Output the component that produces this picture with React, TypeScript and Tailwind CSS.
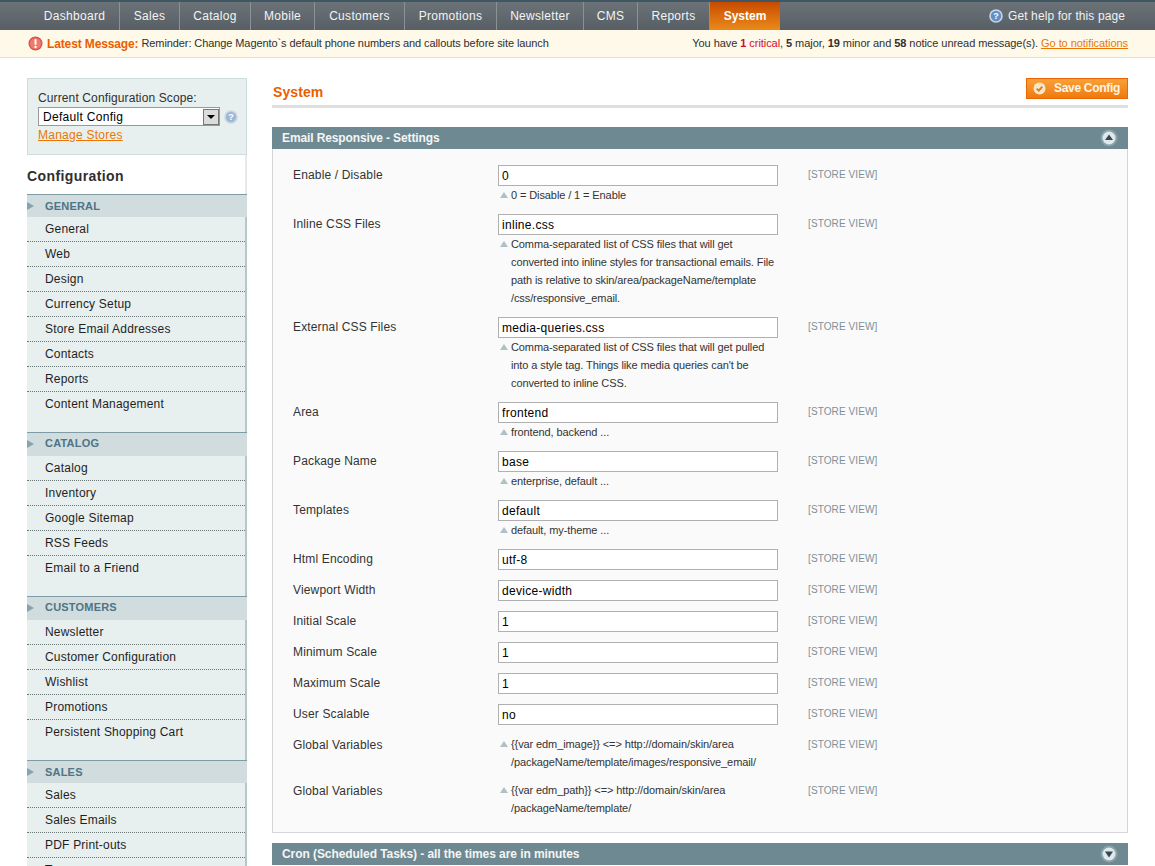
const navItems = [
  { label: "Dashboard", width: "w-[90px]" },
  { label: "Sales", width: "w-[60px]" },
  { label: "Catalog", width: "w-[71px]" },
  { label: "Mobile", width: "w-[64px]" },
  { label: "Customers", width: "w-[90px]" },
  { label: "Promotions", width: "w-[92px]" },
  { label: "Newsletter", width: "w-[87px]" },
  { label: "CMS", width: "w-[54px]" },
  { label: "Reports", width: "w-[72px]" },
];

const menu = [
  { title: "GENERAL", compact: true, items: ["General", "Web", "Design", "Currency Setup", "Store Email Addresses", "Contacts", "Reports", "Content Management"] },
  { title: "CATALOG", items: ["Catalog", "Inventory", "Google Sitemap", "RSS Feeds", "Email to a Friend"] },
  { title: "CUSTOMERS", items: ["Newsletter", "Customer Configuration", "Wishlist", "Promotions", "Persistent Shopping Cart"] },
  { title: "SALES", compact: true, items: ["Sales", "Sales Emails", "PDF Print-outs", "Tax"] },
];

const rows: { label: string; value?: string; note?: string[] }[] = [
  { label: "Enable / Disable", value: "0", note: ["0 = Disable / 1 = Enable"] },
  {
    label: "Inline CSS Files",
    value: "inline.css",
    note: [
      "Comma-separated list of CSS files that will get",
      "converted into inline styles for transactional emails. File",
      "path is relative to skin/area/packageName/template",
      "/css/responsive_email.",
    ],
  },
  {
    label: "External CSS Files",
    value: "media-queries.css",
    note: [
      "Comma-separated list of CSS files that will get pulled",
      "into a style tag. Things like media queries can't be",
      "converted to inline CSS.",
    ],
  },
  { label: "Area", value: "frontend", note: ["frontend, backend ..."] },
  { label: "Package Name", value: "base", note: ["enterprise, default ..."] },
  { label: "Templates", value: "default", note: ["default, my-theme ..."] },
  { label: "Html Encoding", value: "utf-8" },
  { label: "Viewport Width", value: "device-width" },
  { label: "Initial Scale", value: "1" },
  { label: "Minimum Scale", value: "1" },
  { label: "Maximum Scale", value: "1" },
  { label: "User Scalable", value: "no" },
  {
    label: "Global Variables",
    note: ["{{var edm_image}} <=> http://domain/skin/area", "/packageName/template/images/responsive_email/"],
  },
  {
    label: "Global Variables",
    note: ["{{var edm_path}} <=> http://domain/skin/area", "/packageName/template/"],
  },
];

function HelpIcon({ light }: { light?: boolean }) {
  return (
    <svg width="14" height="14" viewBox="0 0 14 14" className="shrink-0">
      <circle cx="7" cy="7" r="6.8" fill={light ? "#c9d8e6" : "#c3d6ea"} />
      <circle cx="7" cy="7" r="5.2" fill={light ? "#9db8d6" : "#5f8fc4"} />
      <text x="7" y="10.2" textAnchor="middle" fontSize="9" fontWeight="700" fill="#fff" fontFamily="Liberation Sans">?</text>
    </svg>
  );
}

function Toggle({ open }: { open: boolean }) {
  return (
    <svg width="18" height="18" viewBox="0 0 18 18">
      <circle cx="9" cy="9" r="8.5" fill="#8ba1a9" />
      <circle cx="9" cy="9" r="6.5" fill="#dfe8ea" />
      <path d={open ? "M9 5.5 L13 11 H5 Z" : "M5 6.5 H13 L9 12.5 Z"} fill="#2f4a57" />
    </svg>
  );
}

function Row({ label, value, note }: { label: string; value?: string; note?: string[] }) {
  return (
    <div className="flex pb-[10px]">
      <div className="w-[205px] shrink-0 pt-[1px] text-[12px] leading-[18px] tracking-[0.15px] text-[#333333]">{label}</div>
      <div className="w-[310px] shrink-0">
        {value !== undefined && (
          <input
            readOnly
            value={value}
            className="block h-[21px] w-[280px] border border-[#b0b0b0] bg-white px-[3px] text-[12px] tracking-[0.3px] text-black outline-none"
          />
        )}
        {note && (
          <div className="relative w-[290px] pl-[13px] text-[11px] leading-[18px] tracking-[-0.1px] text-[#333333]">
            <span className="absolute left-[2px] top-[6px] h-0 w-0 border-x-[4px] border-b-[6px] border-x-transparent border-b-[#b1c0c4]" />
            {note.map((line) => (
              <div key={line} className="whitespace-nowrap">{line}</div>
            ))}
          </div>
        )}
      </div>
      <div className="pt-[2px] text-[10px] leading-[16px] tracking-[0.1px] text-[#7f9099]">[STORE VIEW]</div>
    </div>
  );
}

export default function App() {
  return (
    <div className="h-[866px] overflow-hidden bg-white font-['Liberation_Sans',Arial,sans-serif] text-[12px] text-[#2f2f2f]">
      <div className="flex h-[30px] items-stretch border-t-2 border-[#3f5663] bg-gradient-to-b from-[#6b7278] to-[#585f64] pl-[30px]">
        {navItems.map((item) => (
          <div key={item.label} className={`flex items-center justify-center border-r border-[#8b9297] tracking-[0.3px] text-[#f2f4f4] ${item.width}`}>
            {item.label}
          </div>
        ))}
        <div className="flex w-[70px] items-center justify-center bg-gradient-to-b from-[#c84a00] to-[#ea8a1a] font-bold text-white">
          System
        </div>
        <div className="ml-auto flex items-center gap-[5px] pr-[30px] tracking-[0.1px] text-[#eef1f2]">
          <HelpIcon />
          Get help for this page
        </div>
      </div>

      <div className="flex h-[28px] items-center justify-between border-b border-[#eee2be] bg-[#fff9e9] pl-[28px] pr-[27px] text-[11px]">
        <div className="flex items-center tracking-[-0.09px]">
          <svg width="15" height="15" viewBox="0 0 15 15" className="mr-[4px]">
            <circle cx="7.5" cy="7.5" r="7" fill="#d9534a" />
            <circle cx="7.5" cy="7.5" r="5.6" fill="#ee7b6c" />
            <rect x="6.5" y="3" width="2" height="6" rx="1" fill="#fff" />
            <circle cx="7.5" cy="11" r="1.2" fill="#fff" />
          </svg>
          <span className="mr-[3px] text-[12px] font-bold tracking-[-0.13px] text-[#eb5e00]">Latest Message:</span>
          Reminder: Change Magento`s default phone numbers and callouts before site launch
        </div>
        <div className="tracking-[-0.06px]">
          You have <b className="text-[#d20a2f]">1</b> <span className="text-[#d20a2f]">critical</span>, <b>5</b> major, <b>19</b> minor and <b>58</b> notice unread message(s).{" "}
          <a className="text-[#ea7601] underline">Go to notifications</a>
        </div>
      </div>

      <div className="flex items-start pl-[27px] pr-[27px] pt-[20px]">
        <aside className="w-[220px] shrink-0">
          <div className="h-[77px] border border-[#cddddd] bg-[#e7efef] pl-[10px] pt-[12px]">
            <div className="leading-[15px] tracking-[0.12px]">Current Configuration Scope:</div>
            <div className="mt-[1px] flex items-center gap-[4px]">
              <div className="flex h-[19px] w-[182px] shrink-0 items-center justify-between border border-[#999999] bg-white pl-[4px] tracking-[0.3px] text-black">
                Default Config
                <span className="flex h-[16px] w-[16px] items-center justify-center border border-[#777777] bg-[#dcdcdc]">
                  <span className="h-0 w-0 border-x-[4px] border-t-[4px] border-x-transparent border-t-black" />
                </span>
              </div>
              <HelpIcon light />
            </div>
            <a className="block text-[12px] leading-[18px] tracking-[0.25px] text-[#ea7601] underline">Manage Stores</a>
          </div>
          <div className="flex h-[39px] items-center border-r-2 border-[#e4e9e9] bg-white pt-[4px] text-[14px] font-bold tracking-[0.4px] text-[#2f2f2f]">
            Configuration
          </div>
          <div className="border-r-2 border-[#b7c7c7] bg-[#e7efef]">
            {menu.map((group) => (
              <div key={group.title} className="pb-[15px]">
                <div
                  className={`relative -mr-[2px] flex items-center border-t border-[#7f9ca6] bg-[#d0dcde] pl-[18px] text-[11px] font-bold tracking-[0.2px] text-[#4e7485] ${group.compact ? "h-[23px]" : "h-[24px] pb-[2px]"}`}
                >
                  <span className="absolute left-0 top-[7px] h-0 w-0 border-y-[4px] border-l-[7px] border-y-transparent border-l-[#86a3ae]" />
                  {group.title}
                </div>
                {group.items.map((item, i) => (
                  <div
                    key={item}
                    className={`flex h-[25px] items-center pl-[18px] tracking-[0.2px] text-[#1f1f1f] ${i < group.items.length - 1 ? "border-b border-dotted border-[#6a7575]" : "pb-[1px]"}`}
                  >
                    {item}
                  </div>
                ))}
              </div>
            ))}
          </div>
        </aside>

        <main className="ml-[25px] flex-1">
          <div className="flex h-[30px] items-start justify-between border-b-[3px] border-[#dfdfdf]">
            <h3 className="ml-[1px] mt-[5px] text-[14px] font-bold leading-[18px] tracking-[0.1px] text-[#eb5e00]">System</h3>
            <button className="flex h-[21px] w-[102px] items-center border border-[#ed6502] bg-gradient-to-b from-[#f9a137] to-[#ee7a0a] pb-[2px] pl-[6px] font-bold tracking-[-0.3px] text-[#fff4e0]">
              <svg width="13" height="13" viewBox="0 0 13 13" className="mr-[8px] mt-[2px]">
                <circle cx="6.5" cy="6.5" r="6" fill="#fbe7c8" />
                <path d="M3.7 6.6 L5.8 8.7 L9.3 4.6" fill="none" stroke="#e8760a" strokeWidth="1.8" />
              </svg>
              Save Config
            </button>
          </div>

          <div className="mt-[19px] flex h-[22px] items-center justify-between bg-[#6f8992] pl-[10px] pr-[10px] font-bold tracking-[-0.12px] text-[#f3f6f6]">
            Email Responsive - Settings
            <Toggle open />
          </div>
          <div className="border border-t-0 border-[#d6d6d6] bg-[#fafafa] pb-[5px] pl-[20px] pt-[16px]">
            {rows.map((row, i) => (
              <Row key={i} {...row} />
            ))}
          </div>

          <div className="mt-[10px] flex h-[22px] items-center justify-between bg-[#6f8992] pl-[10px] pr-[10px] font-bold tracking-[-0.07px] text-[#f3f6f6]">
            Cron (Scheduled Tasks) - all the times are in minutes
            <Toggle open={false} />
          </div>
        </main>
      </div>
    </div>
  );
}
